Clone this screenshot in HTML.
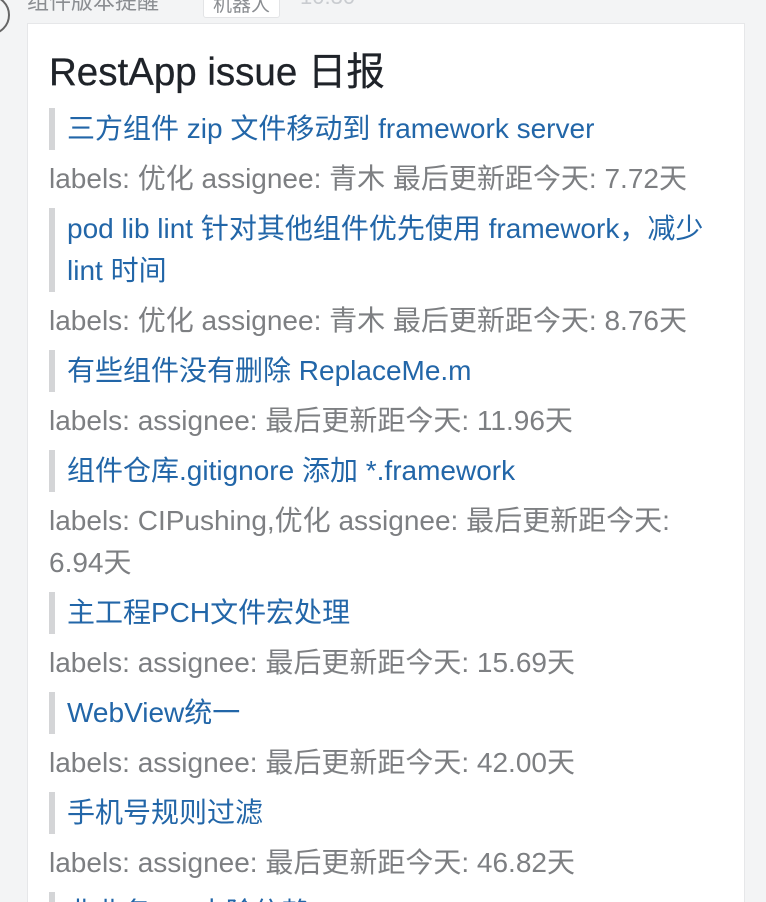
<!DOCTYPE html>
<html style="width:766px;height:902px;overflow:hidden"><head><meta charset="utf-8"><style>
body{margin:0;width:766px;height:902px;overflow:hidden;background:#f3f4f5;font-family:"Liberation Sans","Noto Sans CJK SC",sans-serif;position:relative}
.hdr{position:absolute;top:-16px;left:27px;font-size:22px;color:#8a8d91}
.tag{position:absolute;top:-12px;left:203px;width:75px;height:28px;background:#fff;border:1px solid #e3e4e6;border-radius:3px;font-size:19px;color:#8a8d91;text-align:center;line-height:34px}
.time{position:absolute;top:-16px;left:300px;font-size:22px;color:#c9ccd0}
.av{position:absolute;left:-30px;top:-5px;width:36px;height:36px;border-radius:50%;border:2px solid #666}
.card{position:absolute;left:27px;top:23px;width:718px;height:879px;overflow:hidden;background:#fff;border:1px solid #e6e7e9;border-bottom:none;box-sizing:border-box;padding:0 21px}
h1{margin:0;font-size:38.5px;font-weight:normal;color:#1f2329;line-height:44px;margin-top:27px;height:49px;-webkit-text-stroke:0.3px #1f2329}
.q{border-left:6px solid #d4d5d7;padding-left:12px;color:#2266a8;font-size:28px;line-height:42px;margin:8px 0}
.l{color:#7d7f82;font-size:28px;line-height:42px}
</style></head><body>
<div class="av"></div>
<div class="hdr">组件版本提醒</div>
<div class="tag">机器人</div>
<div class="time">10:30</div>
<div class="card">
<h1>RestApp issue 日报</h1>
<div class="q">三方组件 zip 文件移动到 framework server</div>
<div class="l">labels: 优化 assignee: 青木 最后更新距今天: 7.72天</div>
<div class="q">pod lib lint 针对其他组件优先使用 framework，减少<br>lint 时间</div>
<div class="l">labels: 优化 assignee: 青木 最后更新距今天: 8.76天</div>
<div class="q">有些组件没有删除 ReplaceMe.m</div>
<div class="l">labels: assignee: 最后更新距今天: 11.96天</div>
<div class="q">组件仓库.gitignore 添加 *.framework</div>
<div class="l">labels: CIPushing,优化 assignee: 最后更新距今天:<br>6.94天</div>
<div class="q">主工程PCH文件宏处理</div>
<div class="l">labels: assignee: 最后更新距今天: 15.69天</div>
<div class="q">WebView统一</div>
<div class="l">labels: assignee: 最后更新距今天: 42.00天</div>
<div class="q">手机号规则过滤</div>
<div class="l">labels: assignee: 最后更新距今天: 46.82天</div>
<div class="q">非业务pod去除依赖</div>
</div>
</body></html>
